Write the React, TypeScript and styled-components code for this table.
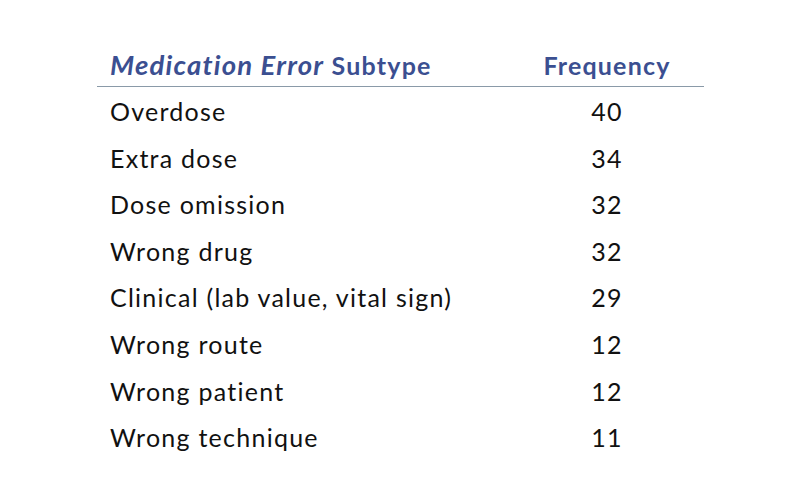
import React from "react";
import styled, { createGlobalStyle } from "styled-components";

const Global = createGlobalStyle`
  html, body { margin: 0; padding: 0; background: #ffffff; }
  body { font-family: Lato, "Open Sans", sans-serif; }
`;

const Page = styled.div`
  width: 801px;
  height: 492px;
  display: flex;
  justify-content: flex-start;
  align-items: flex-start;
  padding: 44px 0 0 97px;
  box-sizing: border-box;
`;

const Table = styled.table`
  border-collapse: collapse;
  border-spacing: 0;
  width: 607px;
  font-family: Lato, sans-serif;
`;

const Th = styled.th<{ $center?: boolean }>`
  text-align: ${(p) => (p.$center ? "center" : "left")};
  color: #3b4f91;
  font-size: 25px;
  font-weight: 700;
  letter-spacing: 1.2px;
  line-height: 42px;
  padding: 0 0 0 ${(p) => (p.$center ? "0" : "13px")};
  vertical-align: middle;
  border-bottom: 1px solid #8a9aa8;
  width: ${(p) => (p.$center ? "194px" : "auto")};
  white-space: nowrap;
`;

const Em = styled.em`
  font-style: italic;
  font-size: 27.5px;
`;

const Td = styled.td<{ $center?: boolean }>`
  text-align: ${(p) => (p.$center ? "center" : "left")};
  color: #111111;
  font-size: 25px;
  font-weight: 400;
  letter-spacing: 1.25px;
  line-height: 44.6px;
  padding: 2px 0 0 ${(p) => (p.$center ? "0" : "13px")};
  vertical-align: middle;
  white-space: nowrap;
`;

const rows: [string, number][] = [
  ["Overdose", 40],
  ["Extra dose", 34],
  ["Dose omission", 32],
  ["Wrong drug", 32],
  ["Clinical (lab value, vital sign)", 29],
  ["Wrong route", 12],
  ["Wrong patient", 12],
  ["Wrong technique", 11],
];

export default function App() {
  return (
    <>
      <Global />
      <Page>
        <Table>
          <thead>
            <tr>
              <Th>
                <Em>Medication Error</Em> Subtype
              </Th>
              <Th $center>Frequency</Th>
            </tr>
          </thead>
          <tbody>
            {rows.map(([name, n]) => (
              <tr key={name}>
                <Td>{name}</Td>
                <Td $center>{n}</Td>
              </tr>
            ))}
          </tbody>
        </Table>
      </Page>
    </>
  );
}
